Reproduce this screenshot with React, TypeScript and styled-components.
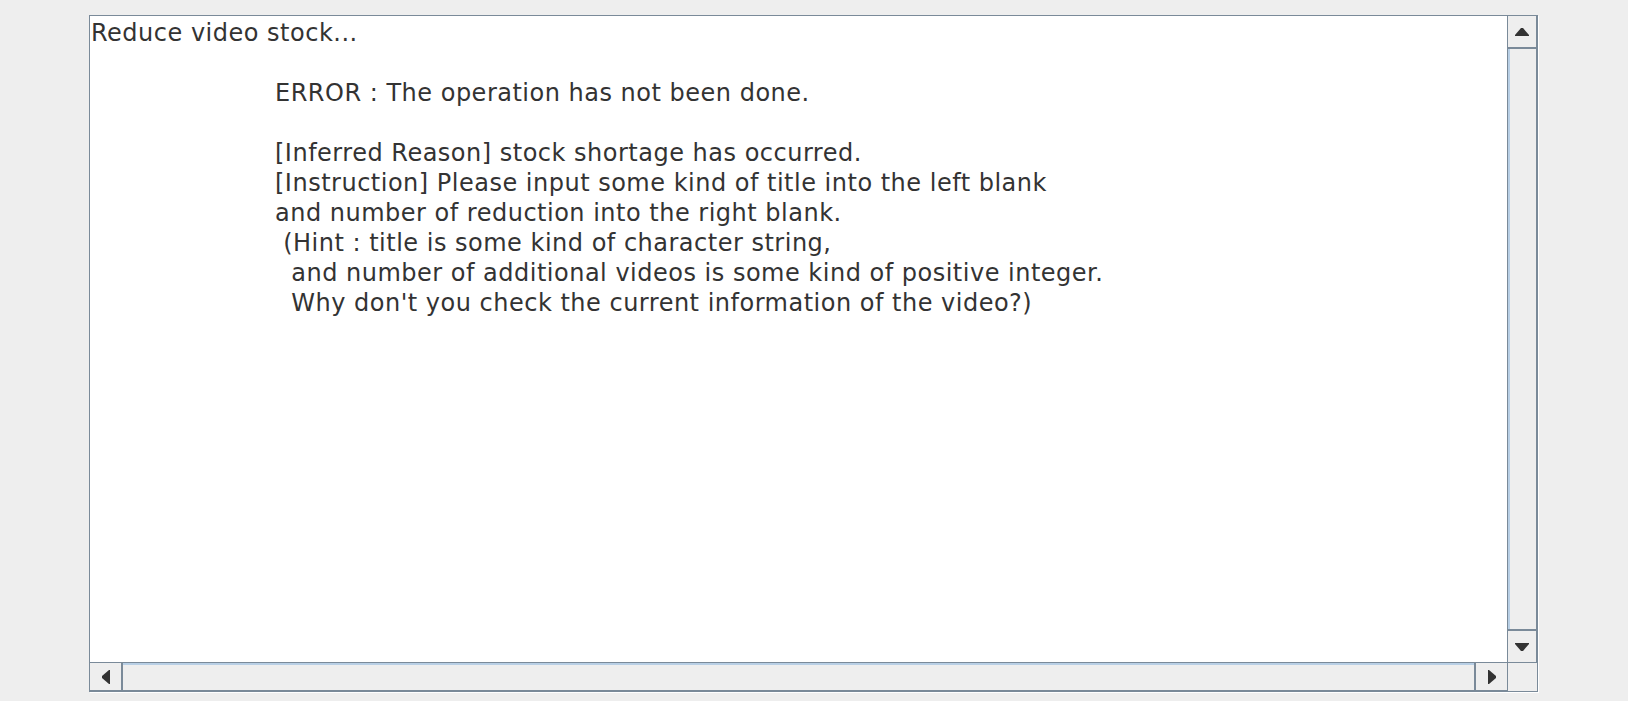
import React from "react";
import styled, { createGlobalStyle } from "styled-components";

const Global = createGlobalStyle`
  html, body { margin: 0; padding: 0; background: #eeeeee; }
  #root { width: 1628px; height: 701px; }
`;

const Page = styled.div`
  width: 1628px;
  height: 701px;
  box-sizing: border-box;
  padding: 15px 0 0 89px;
  background: #eeeeee;
`;

const ScrollPane = styled.div`
  width: 1449px;
  height: 677px;
  box-sizing: border-box;
  border: 1px solid #7a8a99;
  box-shadow: 1px 1px 0 #ffffff;
  display: grid;
  grid-template-columns: 1fr 30px;
  grid-template-rows: 1fr 29px;
`;

const TextArea = styled.div`
  background: #ffffff;
  font-family: "DejaVu Sans", sans-serif;
  font-size: 24px;
  letter-spacing: 0.5px;
  line-height: 30px;
  color: #333333;
  padding: 2px 0 0 1px;
  overflow: hidden;
`;

const Line = styled.div<{ $indent: number }>`
  height: 30px;
  white-space: pre;
  padding-left: ${(p) => p.$indent}px;
`;

const VBar = styled.div`
  border-left: 1px solid #7a8a99;
  background: #eeeeee;
  display: flex;
  flex-direction: column;
`;

const HBar = styled.div`
  border-top: 1px solid #7a8a99;
  background: #eeeeee;
  display: flex;
`;

const Corner = styled.div`
  border-left: 1px solid #7a8a99;
  border-top: 1px solid #7a8a99;
  background: #eeeeee;
`;

const VButton = styled.div<{ $dir: "up" | "down" }>`
  height: 33px;
  flex: none;
  box-sizing: border-box;
  background: #eeeeee;
  ${(p) => (p.$dir === "up" ? "border-bottom: 2px solid #7a8a99;" : "border-top: 2px solid #7a8a99;")}
  border-right: 1px solid #7a8a99;
  display: flex;
  align-items: center;
  justify-content: center;
`;

const VTrack = styled.div`
  flex: 1;
  border-left: 2px solid #b8cfe5;
  border-right: 1px solid #7a8a99;
  background: #eeeeee;
`;

const HButton = styled.div<{ $dir: "left" | "right" }>`
  width: 33px;
  flex: none;
  box-sizing: border-box;
  background: #eeeeee;
  ${(p) => (p.$dir === "left" ? "border-right: 2px solid #7a8a99;" : "border-left: 2px solid #7a8a99;")}
  border-bottom: 1px solid #7a8a99;
  display: flex;
  align-items: center;
  justify-content: center;
`;

const HTrack = styled.div`
  flex: 1;
  border-top: 2px solid #b8cfe5;
  border-bottom: 1px solid #7a8a99;
  background: #eeeeee;
`;

const Arrow = ({ dir }: { dir: "up" | "down" | "left" | "right" }) => {
  const pts: Record<string, string> = {
    up: "6,0 8,0 14,7 14,8 0,8 0,7",
    down: "0,0 14,0 14,1 8,8 6,8 0,1",
    left: "0,6 0,8 7,14 8,14 8,0 7,0",
    right: "0,0 1,0 8,6 8,8 1,14 0,14",
  };
  const vertical = dir === "up" || dir === "down";
  return (
    <svg width={vertical ? 14 : 8} height={vertical ? 8 : 14} viewBox={vertical ? "0 0 14 8" : "0 0 8 14"}>
      <polygon points={pts[dir]} fill="#333333" />
    </svg>
  );
};

const lines: { text: string; indent: number }[] = [
  { text: "Reduce video stock...", indent: 0 },
  { text: "", indent: 0 },
  { text: "ERROR : The operation has not been done.", indent: 184 },
  { text: "", indent: 0 },
  { text: "[Inferred Reason] stock shortage has occurred.", indent: 184 },
  { text: "[Instruction] Please input some kind of title into the left blank", indent: 184 },
  { text: "and number of reduction into the right blank.", indent: 184 },
  { text: " (Hint : title is some kind of character string,", indent: 184 },
  { text: "  and number of additional videos is some kind of positive integer.", indent: 184 },
  { text: "  Why don't you check the current information of the video?)", indent: 184 },
];

export default function App() {
  return (
    <>
      <Global />
      <Page>
        <ScrollPane>
          <TextArea>
            {lines.map((l, i) => (
              <Line key={i} $indent={l.indent}>
                {l.text}
              </Line>
            ))}
          </TextArea>
          <VBar>
            <VButton $dir="up">
              <Arrow dir="up" />
            </VButton>
            <VTrack />
            <VButton $dir="down">
              <Arrow dir="down" />
            </VButton>
          </VBar>
          <HBar>
            <HButton $dir="left">
              <Arrow dir="left" />
            </HButton>
            <HTrack />
            <HButton $dir="right">
              <Arrow dir="right" />
            </HButton>
          </HBar>
          <Corner />
        </ScrollPane>
      </Page>
    </>
  );
}
